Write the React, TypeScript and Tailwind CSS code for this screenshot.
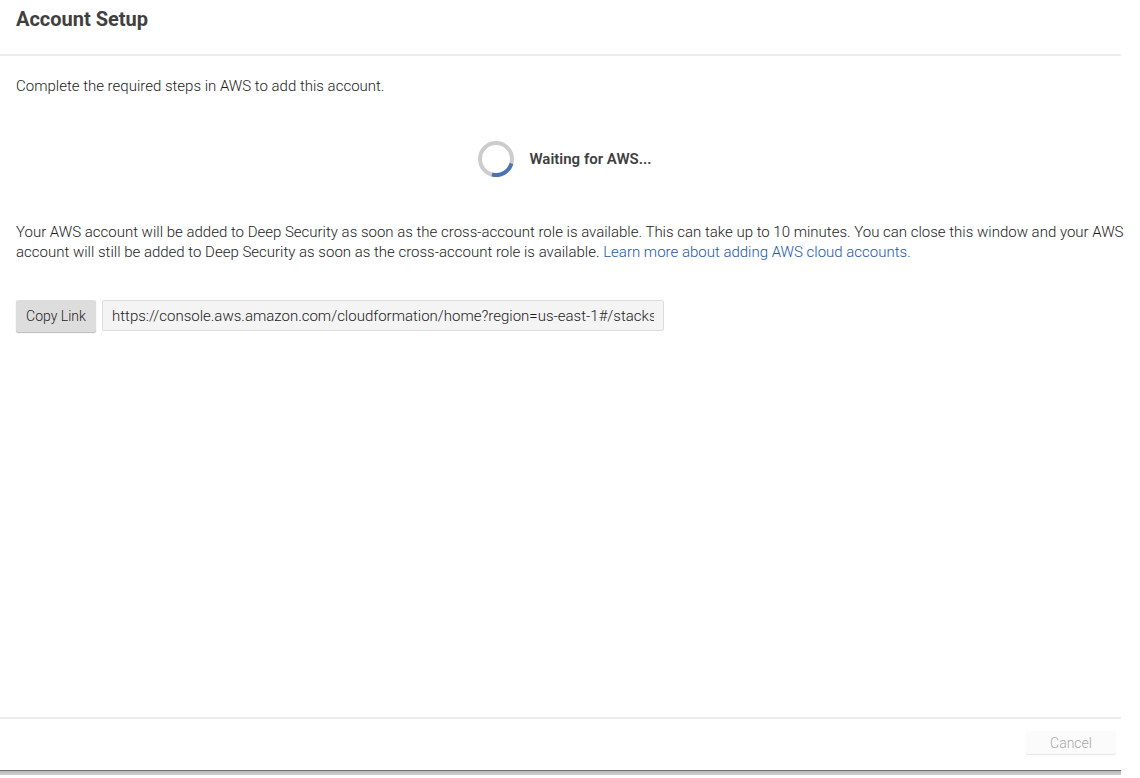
import React from "react";

const STACK_URL =
  "https://console.aws.amazon.com/cloudformation/home?region=us-east-1#/stacks/new?stackName=DeepSecuritySetup";

function Spinner() {
  return (
    <svg className="size-9 shrink-0" viewBox="0 0 36 36" fill="none" role="img" aria-label="Loading">
      <circle cx="18" cy="18" r="16" stroke="#cccccc" strokeWidth="4" />
      <path d="M33.5 22.5A16 16 0 0 1 14 33.5" stroke="#4a73b1" strokeWidth="4" />
    </svg>
  );
}

export default function App() {
  return (
    <div className="flex min-h-screen flex-col bg-white pr-[19px] pb-[3px] font-['Roboto','Liberation_Sans',sans-serif] text-[15px] leading-5 font-light text-[#1c1c1c]">
      <header className="flex h-14 items-start border-b-2 border-[#ececec] px-4 pt-1">
        <h1 className="text-xl leading-[30px] font-bold text-[#404040]">Account Setup</h1>
      </header>

      <main className="flex-1 px-4 pt-5">
        <p>Complete the required steps in AWS to add this account.</p>

        <div className="mt-[45px] flex items-center justify-center gap-[15px] pl-[9px]">
          <Spinner />
          <strong className="font-semibold text-[#404040]">Waiting for AWS...</strong>
        </div>

        <p className="mt-[45px] -mr-6">
          Your AWS account will be added to Deep Security as soon as the cross-account role is available. This can take
          up to 10 minutes. You can close this window and your AWS account will still be added to Deep Security as soon
          as the cross-account role is available.{" "}
          <a href="#learn-more" className="text-[#2257ab]">
            Learn more about adding AWS cloud accounts.
          </a>
        </p>

        <div className="mt-[38px] flex items-start gap-1.5">
          <button
            type="button"
            className="h-8 w-20 shrink-0 rounded-xs bg-[#dddddd] text-sm shadow-[0_1px_1px_#bbbbbb]"
          >
            Copy Link
          </button>
          <input
            type="text"
            readOnly
            aria-label="AWS console link"
            defaultValue={STACK_URL}
            className="h-[31px] w-full max-w-[562px] rounded-xs border border-[#dddddd] bg-[#f4f4f4] px-[9px] outline-none"
          />
        </div>
      </main>

      <footer className="flex h-[53px] items-start justify-end border-t-2 border-[#ececec] pt-3 pr-[5px]">
        <button
          type="button"
          disabled
          className="h-[23px] w-[90px] rounded-xs bg-[#fbfbfb] text-sm text-[#a8a8a8] shadow-[0_1px_1px_#e4e4e4]"
        >
          Cancel
        </button>
      </footer>
      <div className="h-[5px] border-t border-[#707070] bg-linear-to-b from-[#b8b8b8] to-[#d0d0d0]" />
    </div>
  );
}
